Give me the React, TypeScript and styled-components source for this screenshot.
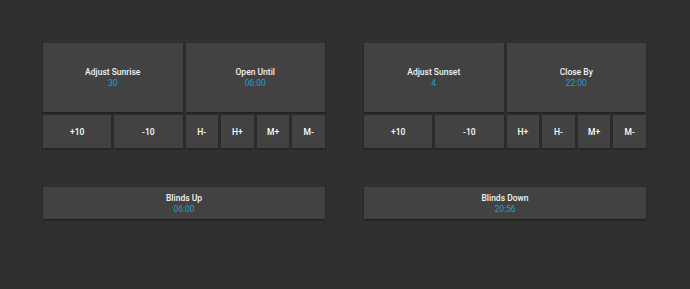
import React from "react";
import styled, { createGlobalStyle } from "styled-components";

const Global = createGlobalStyle`
  html, body { margin: 0; padding: 0; background: #303030; }
  body { font-family: Roboto, "Noto Sans", sans-serif; -webkit-font-smoothing: antialiased; }
`;

const Page = styled.div`
  width: 690px;
  height: 289px;
  box-sizing: border-box;
  padding: 43px 44px 0 43px;
  display: grid;
  grid-template-columns: 282px 282px;
  column-gap: 39px;
  align-content: start;
`;

const Column = styled.div`
  display: flex;
  flex-direction: column;
`;

const TopGrid = styled.div<{ $top?: number }>`
  display: grid;
  grid-template-columns: 1fr 1fr;
  gap: 3px;
  margin-top: ${(p) => p.$top ?? 0}px;
`;

const Tile = styled.div<{ $h: number }>`
  height: ${(p) => p.$h}px;
  background: #424242;
  box-shadow: 0 1px 2px rgba(0, 0, 0, 0.45);
  display: flex;
  flex-direction: column;
  align-items: center;
  justify-content: center;
  color: #ffffff;
  font-size: 8.5px;
  font-weight: 500;
  line-height: 11px;
  padding-top: 1px;
  box-sizing: border-box;
  cursor: pointer;
`;

const Label = styled.span`
  color: #f2f2f2;
`;

const Value = styled.span`
  color: #1e9fd6;
  font-weight: 400;
`;

const ButtonGroup = styled.div<{ $n: number }>`
  display: grid;
  grid-template-columns: repeat(${(p) => p.$n}, 1fr);
  gap: 3px;
`;

const Spacer = styled.div`
  height: 39px;
`;

type Side = {
  adjLabel: string;
  adjValue: string;
  timeLabel: string;
  timeValue: string;
  hm: string[];
  blindsLabel: string;
  blindsValue: string;
};

const sides: Side[] = [
  {
    adjLabel: "Adjust Sunrise",
    adjValue: "30",
    timeLabel: "Open Until",
    timeValue: "06:00",
    hm: ["H-", "H+", "M+", "M-"],
    blindsLabel: "Blinds Up",
    blindsValue: "06:00",
  },
  {
    adjLabel: "Adjust Sunset",
    adjValue: "4",
    timeLabel: "Close By",
    timeValue: "22:00",
    hm: ["H+", "H-", "M+", "M-"],
    blindsLabel: "Blinds Down",
    blindsValue: "20:56",
  },
];

function Panel({ s }: { s: Side }) {
  return (
    <Column>
      <TopGrid>
        <Tile $h={69}>
          <Label>{s.adjLabel}</Label>
          <Value>{s.adjValue}</Value>
        </Tile>
        <Tile $h={69}>
          <Label>{s.timeLabel}</Label>
          <Value>{s.timeValue}</Value>
        </Tile>
      </TopGrid>
      <TopGrid $top={3}>
        <ButtonGroup $n={2}>
          <Tile $h={33}>+10</Tile>
          <Tile $h={33}>-10</Tile>
        </ButtonGroup>
        <ButtonGroup $n={4}>
          {s.hm.map((b) => (
            <Tile key={b} $h={33}>
              {b}
            </Tile>
          ))}
        </ButtonGroup>
      </TopGrid>
      <Spacer />
      <Tile $h={32}>
        <Label>{s.blindsLabel}</Label>
        <Value>{s.blindsValue}</Value>
      </Tile>
    </Column>
  );
}

export default function App() {
  return (
    <>
      <Global />
      <Page>
        {sides.map((s) => (
          <Panel key={s.blindsLabel} s={s} />
        ))}
      </Page>
    </>
  );
}
